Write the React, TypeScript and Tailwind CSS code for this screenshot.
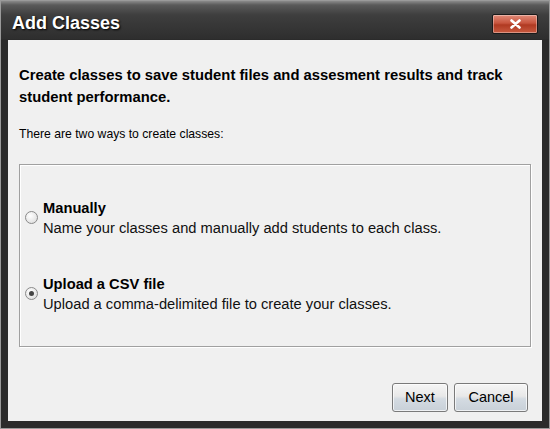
import React from "react";

export default function App() {
  return (
    <div className="w-[550px] h-[429px] bg-[#2b2b2b] border border-[#9a9a9a] flex flex-col font-['Liberation_Sans',Arial,sans-serif]">
      {/* Title bar */}
      <div className="h-[38px] flex items-center justify-between pl-[11px] pr-[11px] bg-[linear-gradient(to_bottom,#8a8a8a_0px,#5a5a5a_4px,#3e3e3e_14px,#2e2e2e_38px)]">
        <span className="text-white font-bold text-[18px] [text-shadow:1px_1px_2px_#000] mt-[7px]">
          Add Classes
        </span>
        <button className="w-[46px] h-[20px] mt-[8px] border border-[#1a1a1a] rounded-[2px] flex items-center justify-center bg-[linear-gradient(to_bottom,#e08a78_0%,#c8553e_45%,#b03a22_55%,#c85a40_100%)] shadow-[inset_0_0_0_1px_rgba(255,255,255,0.35)]">
          <svg width="11" height="10" viewBox="0 0 11 10">
            <path d="M1.5 1.5 L9.5 8.5 M9.5 1.5 L1.5 8.5" stroke="#fff" strokeWidth="2.6" strokeLinecap="round" />
          </svg>
        </button>
      </div>

      {/* Content */}
      <div className="flex-1 mx-[7px] mb-[7px] mt-[1px] bg-[#f0f0f0] flex flex-col px-[11px] text-[#000]">
        <p className="font-bold text-[14.8px] leading-[22px] mt-[24px]">
          Create classes to save student files and assesment results and track student performance.
        </p>
        <p className="text-[12.2px] leading-[14px] mt-[19px]">There are two ways to create classes:</p>

        <div className="mt-[23px] h-[183px] border border-[#a0a0a0] shadow-[1px_1px_0_#fff,inset_1px_1px_0_#fff] flex flex-col justify-center gap-[36px] pl-[5px]">
          <Option title="Manually" desc="Name your classes and manually add students to each class." />
          <Option title="Upload a CSV file" desc="Upload a comma-delimited file to create your classes." checked />
        </div>

        <div className="flex justify-end gap-[6px] mt-[36px] mr-[3px]">
          <Btn label="Next" w="w-[56px]" />
          <Btn label="Cancel" w="w-[74px]" />
        </div>
      </div>
    </div>
  );
}

function Option({ title, desc, checked }: { title: string; desc: string; checked?: boolean }) {
  return (
    <div className="flex items-center gap-[5px]">
      <span className="w-[13px] h-[13px] rounded-full border border-[#8a8a8a] bg-[radial-gradient(circle_at_40%_35%,#ffffff,#d8d8d8)] flex items-center justify-center">
        {checked && <span className="w-[5px] h-[5px] rounded-full bg-[#444]" />}
      </span>
      <div className="flex flex-col">
        <span className="font-bold text-[14.7px] leading-[20px]">{title}</span>
        <span className="text-[14.7px] leading-[20px] text-[#111]">{desc}</span>
      </div>
    </div>
  );
}

function Btn({ label, w }: { label: string; w: string }) {
  return (
    <button className={`${w} h-[29px] rounded-[3px] border border-[#7a7a7a] text-[14.5px] text-black bg-[linear-gradient(to_bottom,#f6f6f6_0%,#e8e8e8_45%,#d4dbe2_55%,#c8d0d8_100%)] shadow-[inset_0_0_0_1px_rgba(255,255,255,0.7)]`}>
      {label}
    </button>
  );
}
